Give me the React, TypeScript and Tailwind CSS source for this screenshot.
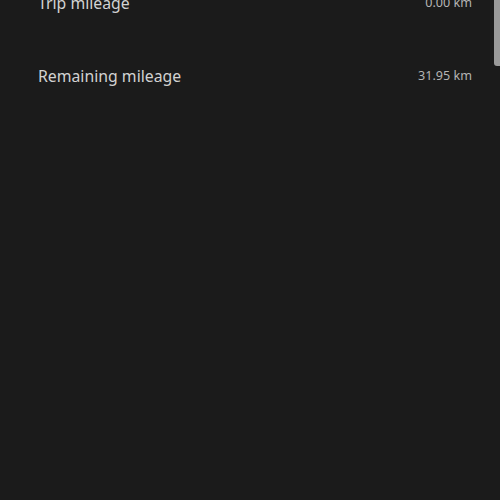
import React from 'react';

const rows = [
  { label: 'Trip mileage', value: '0.00 km' },
  { label: 'Remaining mileage', value: '31.95 km' },
];

const App: React.FC = () => (
  <div className="relative h-[500px] w-[500px] overflow-hidden bg-[#1b1b1b]" style={{ fontFamily: '"Noto Sans", sans-serif' }}>
    <div className="-mt-[33px] flex flex-col">
      {rows.map((r) => (
        <div key={r.label} className="flex h-[73px] items-center justify-between pl-[38px] pr-[28px]">
          <span className="text-[15.8px] text-[#d2d2d2]">{r.label}</span>
          <span className="text-[12.6px] text-[#b4b4b4]">{r.value}</span>
        </div>
      ))}
    </div>
    <div className="absolute right-0 top-0 h-[66px] w-[6px] rounded-bl-[3px] bg-[#9a9a9a]" />
  </div>
);

export default App;
